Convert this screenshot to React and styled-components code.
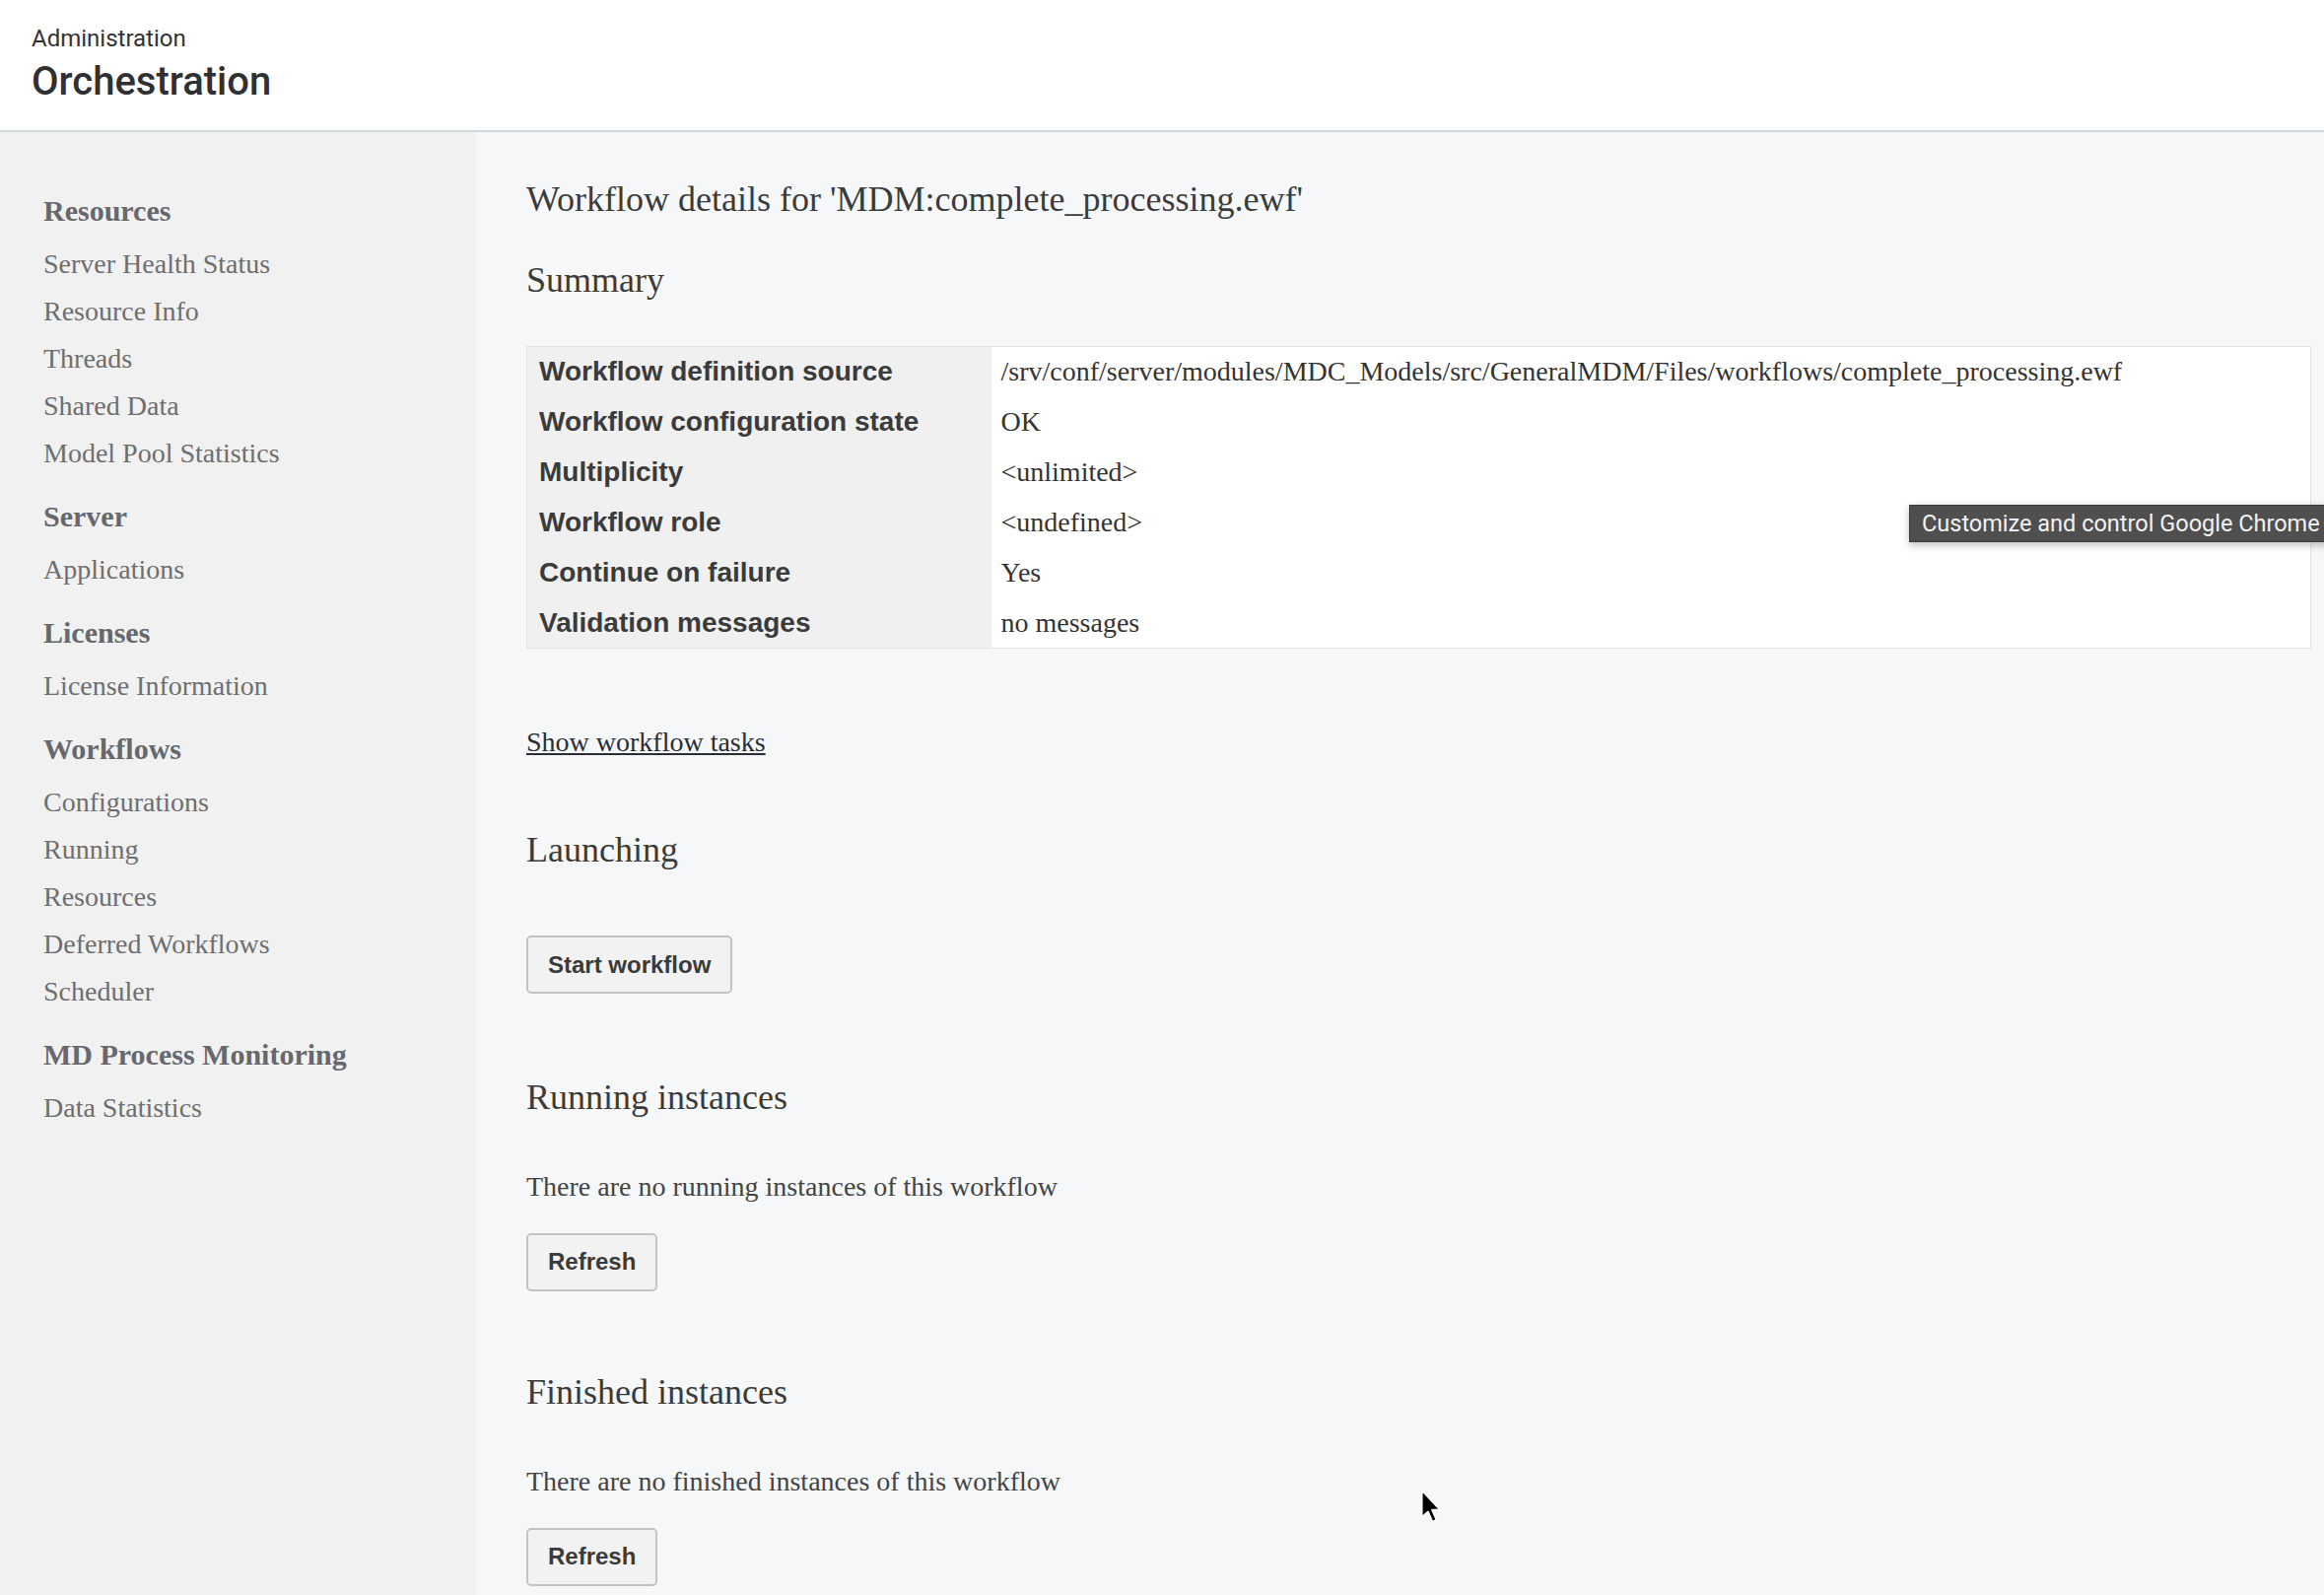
import React from 'react';
import styled, { createGlobalStyle } from 'styled-components';

const serif = '"Liberation Serif", "Times New Roman", serif';
const sans = '"Liberation Sans", Arial, sans-serif';

const GlobalStyle = createGlobalStyle`
  * { box-sizing: border-box; }
  html, body { margin: 0; padding: 0; overflow: hidden; }
  body { background: #f6f7f9; font-family: ${serif}; }
`;

const Page = styled.div`
  position: relative;
  width: 2358px;
  height: 1618px;
  display: flex;
  flex-direction: column;
  overflow: hidden;
`;

const Header = styled.header`
  flex: none;
  height: 134px;
  background: #fff;
  border-bottom: 2px solid #cfd8dc;
  padding: 24.5px 0 0 32px;
  font-family: Roboto, "Liberation Sans", sans-serif;
`;

const Crumb = styled.div`
  font-size: 24px;
  line-height: 29px;
  color: #333;
`;

const PageTitle = styled.div`
  margin-top: 5px;
  font-size: 40px;
  line-height: 48px;
  font-weight: 500;
  color: #2f3034;
`;

const Body = styled.div`
  flex: 1;
  display: flex;
  min-height: 0;
`;

/* left navigation */
const Sidebar = styled.nav`
  flex: none;
  width: 483px;
  background: #f1f1f1;
  padding: 56px 0 0 44px;
`;

const NavGroup = styled.div`
  & + & {
    margin-top: 16px;
  }
`;

const NavHeading = styled.div`
  font-size: 30px;
  line-height: 48px;
  font-weight: bold;
  color: #67686e;
  margin-bottom: 6px;
`;

const NavItem = styled.a`
  display: block;
  font-size: 28px;
  line-height: 48px;
  color: #6e6e6e;
  text-decoration: none;
`;

/* main area */
const Main = styled.main`
  flex: 1;
  padding: 47.5px 13px 0 51px;
  color: #3d3d3d;
`;

const Title = styled.h1`
  margin: 0;
  font-size: 36px;
  line-height: 41px;
  font-weight: normal;
  color: #3b3b3b;
`;

const SectionTitle = styled.h2`
  margin: ${(p) => p.$top}px 0 0;
  font-size: 36px;
  line-height: 41px;
  font-weight: normal;
  color: #3b3b3b;
`;

const SummaryTable = styled.table`
  margin-top: 46px;
  width: 100%;
  border-collapse: collapse;
  border: 1px solid #e3e3e3;
`;

const Row = styled.tr`
  height: 51px;
`;

const Label = styled.th`
  width: 471px;
  padding: 0 12px;
  background: #f0f0f0;
  font-family: ${sans};
  font-size: 28px;
  font-weight: bold;
  color: #3b3b3b;
  text-align: left;
  white-space: nowrap;
`;

const Value = styled.td`
  padding: 0 10px;
  background: #fff;
  font-size: 28px;
  color: #333;
  white-space: nowrap;
`;

const TaskLink = styled.a`
  display: block;
  width: max-content;
  margin-top: 77.5px;
  font-size: 28px;
  line-height: 34px;
  color: #2b2d36;
  text-decoration: underline;
`;

const Note = styled.p`
  margin: 53.5px 0 0;
  font-size: 28px;
  line-height: 34px;
  color: #444;
`;

const Button = styled.button`
  display: block;
  margin-top: ${(p) => p.$top}px;
  height: 59px;
  padding: 0 20px;
  border: 2px solid #c3c3c3;
  border-radius: 5px;
  background: #f2f2f2;
  font-family: ${sans};
  font-size: 24px;
  font-weight: bold;
  color: #3a3a3a;
`;

/* overlays */
const Tooltip = styled.div`
  position: absolute;
  left: 1937px;
  top: 512px;
  height: 38px;
  padding: 0 12px;
  display: flex;
  align-items: center;
  background: #4f4f4f;
  border: 1px solid #3a3a3a;
  box-shadow: 0 3px 8px rgba(0, 0, 0, 0.25);
  font-family: Roboto, "Liberation Sans", sans-serif;
  font-size: 23.5px;
  color: #f2f2f2;
  white-space: nowrap;
`;

const Cursor = styled.svg`
  position: absolute;
  left: 1440px;
  top: 1509px;
`;

const summary = [
  ['Workflow definition source', '/srv/conf/server/modules/MDC_Models/src/GeneralMDM/Files/workflows/complete_processing.ewf'],
  ['Workflow configuration state', 'OK'],
  ['Multiplicity', '<unlimited>'],
  ['Workflow role', '<undefined>'],
  ['Continue on failure', 'Yes'],
  ['Validation messages', 'no messages'],
];

const nav = [
  { title: 'Resources', items: ['Server Health Status', 'Resource Info', 'Threads', 'Shared Data', 'Model Pool Statistics'] },
  { title: 'Server', items: ['Applications'] },
  { title: 'Licenses', items: ['License Information'] },
  { title: 'Workflows', items: ['Configurations', 'Running', 'Resources', 'Deferred Workflows', 'Scheduler'] },
  { title: 'MD Process Monitoring', items: ['Data Statistics'] },
];

export default function App() {
  return (
    <Page>
      <GlobalStyle />
      <Header>
        <Crumb>Administration</Crumb>
        <PageTitle>Orchestration</PageTitle>
      </Header>
      <Body>
        <Sidebar>
          {nav.map((g) => (
            <NavGroup key={g.title}>
              <NavHeading>{g.title}</NavHeading>
              {g.items.map((i) => (
                <NavItem key={i} href="#">{i}</NavItem>
              ))}
            </NavGroup>
          ))}
        </Sidebar>
        <Main>
          <Title>Workflow details for 'MDM:complete_processing.ewf'</Title>
          <SectionTitle $top={41.5}>Summary</SectionTitle>
          <SummaryTable>
            <tbody>
              {summary.map(([k, v]) => (
                <Row key={k}>
                  <Label>{k}</Label>
                  <Value>{v}</Value>
                </Row>
              ))}
            </tbody>
          </SummaryTable>
          <TaskLink href="#">Show workflow tasks</TaskLink>

          <SectionTitle $top={72.5}>Launching</SectionTitle>
          <Button $top={66}>Start workflow</Button>

          <SectionTitle $top={84.5}>Running instances</SectionTitle>
          <Note>There are no running instances of this workflow</Note>
          <Button $top={29.5}>Refresh</Button>

          <SectionTitle $top={82}>Finished instances</SectionTitle>
          <Note>There are no finished instances of this workflow</Note>
          <Button $top={29.5}>Refresh</Button>
        </Main>
      </Body>

      <Tooltip>Customize and control Google Chrome</Tooltip>
      <Cursor width="24" height="38" viewBox="0 0 19 30">
        <path
          d="M2 2 L2 24 L7 19.5 L10.5 27.5 L14 26 L10.5 18 L17 18 Z"
          fill="#000"
          stroke="#fff"
          strokeWidth="1.6"
          strokeLinejoin="round"
        />
      </Cursor>
    </Page>
  );
}
